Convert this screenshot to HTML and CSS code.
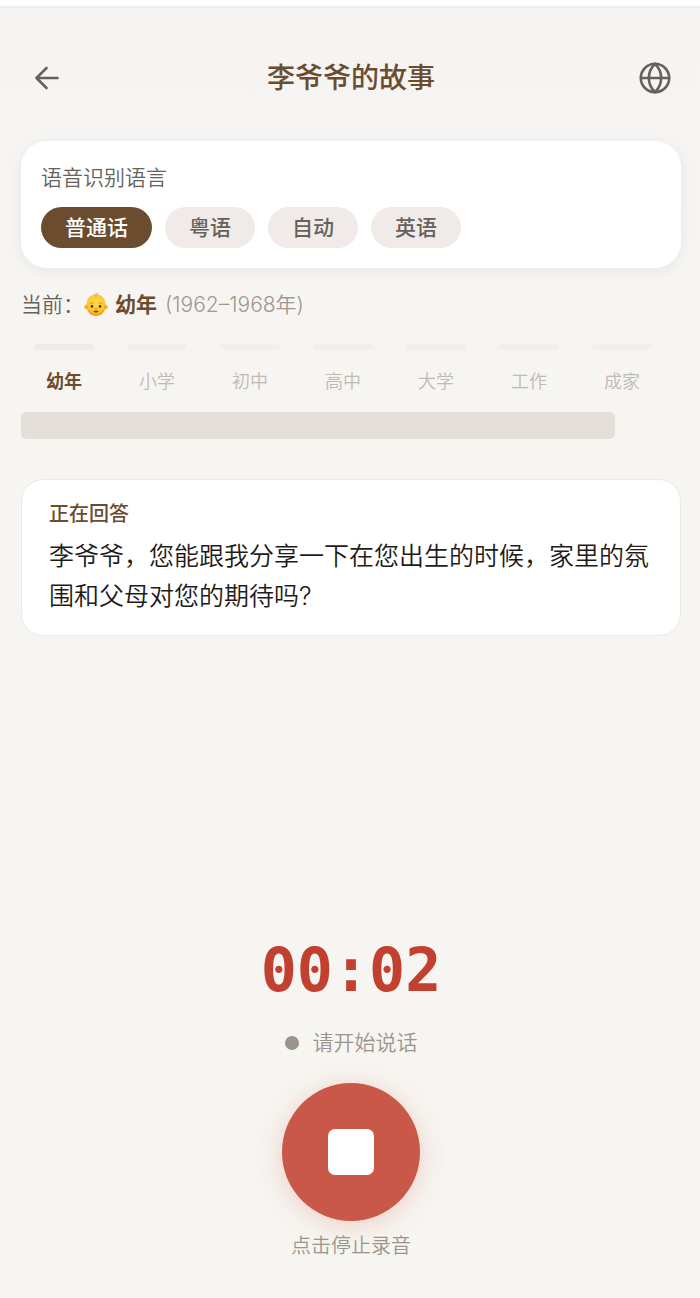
FILE: index.html
```html
<!DOCTYPE html>
<html lang="zh-CN">

<head>
    <meta charset="UTF-8" />
    <meta name="viewport" content="width=device-width, initial-scale=1">
    <title>李爷爷的故事</title>
    <link rel="stylesheet" href="styles.css">
</head>

<body>
    <div class="page">
        <header class="header">
            <button type="button" class="icon-btn" aria-label="返回">
                <svg width="32" height="32" viewBox="0 0 32 32" fill="none" stroke="currentColor" stroke-width="2.6" stroke-linecap="round" stroke-linejoin="round">
                    <path d="M26.500 16H5.500M15.500 6L5.500 16l10 10" />
                </svg>
            </button>
            <h1 class="title">李爷爷的故事</h1>
            <button type="button" class="icon-btn" aria-label="语言">
                <svg width="32" height="32" viewBox="0 0 32 32" fill="none" stroke="currentColor" stroke-width="2.6" stroke-linecap="round">
                    <circle cx="16" cy="16" r="14.2" />
                    <path d="M2 16h28M16 2C7.800 9.500 7.800 22.500 16 30M16 2c8.200 7.500 8.200 20.500 0 28" />
                </svg>
            </button>
        </header>

        <main class="main">
            <section class="lang-card">
                <h2 class="lang-label">语音识别语言</h2>
                <div class="chips">
                    <button type="button" class="chip active">普通话</button>
                    <button type="button" class="chip">粤语</button>
                    <button type="button" class="chip">自动</button>
                    <button type="button" class="chip">英语</button>
                </div>
            </section>

            <p class="current">
                <span>当前：</span>
                <svg class="baby" width="24" height="24" viewBox="0 0 24 24" role="img" aria-label="婴儿">
                    <defs>
                        <radialGradient id="skin" cx=".5" cy=".38" r=".62">
                            <stop offset="0" stop-color="#ffdc45" />
                            <stop offset=".7" stop-color="#fdc52d" />
                            <stop offset="1" stop-color="#ec9c16" />
                        </radialGradient>
                    </defs>
                    <circle cx="2.600" cy="14" r="2.300" fill="#f5b021" />
                    <circle cx="21.400" cy="14" r="2.300" fill="#f5b021" />
                    <path d="M12 1.500C6 1.500 2.500 6 2.500 12.500 2.500 19 7 23 12 23s9.500-4 9.500-10.500C21.500 6 18 1.500 12 1.500z" fill="url(#skin)" />
                    <path d="M14 .8c-1.500-.5-3.400.2-3.300 1.500.1 1.200 1.900 1.300 2.300.4" fill="none" stroke="#e0951b" stroke-width=".8" stroke-linecap="round" />
                    <path d="M6.500 10.300q1.200-1 2.500-.3M15 10q1.300-.7 2.500.3" fill="none" stroke="#c77d18" stroke-width=".8" stroke-linecap="round" />
                    <ellipse cx="8" cy="13.200" rx="1.200" ry="1.500" fill="#45301c" />
                    <ellipse cx="16" cy="13.200" rx="1.200" ry="1.500" fill="#45301c" />
                    <path d="M11 15.500q1 .7 2 0" fill="none" stroke="#d38b18" stroke-width=".8" stroke-linecap="round" />
                    <path d="M9.300 18q2.700-.8 5.400 0-2.700 3.400-5.400 0z" fill="#8d3b1b" />
                </svg>
                <strong>幼年</strong>
                <span class="years">(1962–1968年)</span>
            </p>

            <ol class="steps">
                <li class="step now">幼年</li>
                <li class="step">小学</li>
                <li class="step">初中</li>
                <li class="step">高中</li>
                <li class="step">大学</li>
                <li class="step">工作</li>
                <li class="step">成家</li>
            </ol>
            <div class="scroll-track">
                <div class="scroll-thumb"></div>
            </div>

            <section class="question">
                <h2 class="question-label">正在回答</h2>
                <p class="question-text">李爷爷，您能跟我分享一下在您出生的时候，家里的氛围和父母对您的期待吗?</p>
            </section>
        </main>

        <section class="recorder">
            <div class="timer" role="timer">00:02</div>
            <p class="status"><span class="dot"></span>请开始说话</p>
            <button type="button" class="record-btn" id="stop" aria-labelledby="stop-hint">
                <span class="stop-icon"></span>
            </button>
            <p class="hint" id="stop-hint">点击停止录音</p>
        </section>
    </div>
</body>

</html>
```
FILE: styles.css
```css
* {
    margin: 0;
    padding: 0;
    box-sizing: border-box;
}

body {
    background: #f6f5f2;
    font-family: Inter, "Noto Sans CJK SC", sans-serif;
    font-size: 21px;
    font-weight: 350;
    line-height: 30px;
    color: #66615d;
}

button {
    border: none;
    background: none;
    font: inherit;
    color: inherit;
    cursor: pointer;
}

.page {
    min-height: 100vh;
    display: flex;
    flex-direction: column;
    border-top: 6px solid #fefefe;
    background: linear-gradient(#f5f4f3, #f6f5f1 400px);
}

/* header */
.header {
    display: flex;
    align-items: center;
    justify-content: space-between;
    padding: 46px 19px 39px 21px;
    border-top: 2px solid #ececea;
}

.icon-btn {
    display: flex;
    align-items: center;
    justify-content: center;
    width: 52px;
    height: 48px;
    color: #66615d;
}

.title {
    font-size: 28px;
    line-height: 40px;
    font-weight: 500;
    color: #6b4c2f;
}

.main {
    padding: 0 19px 0 21px;
}

/* language */
.lang-card {
    padding: 22px 20px 20px;
    background: #fff;
    border-radius: 26px;
    box-shadow: 0 3px 14px rgba(0, 0, 0, 0.06);
}

.lang-label {
    font-size: 21px;
    font-weight: 350;
}

.chips {
    display: flex;
    flex-wrap: wrap;
    gap: 13px;
    margin-top: 14px;
}

.chip {
    height: 41px;
    padding: 0 24px;
    border-radius: 21px;
    background: #f0ebe8;
    font-weight: 500;
}

.chip.active {
    background: #6b4c2f;
    color: #fff;
}

/* current stage */
.current {
    display: flex;
    align-items: center;
    margin-top: 22px;
}

.baby {
    margin-right: 7px;
}

.current strong {
    margin-right: 8px;
    font-weight: 700;
    color: #6b4c2f;
}

.years {
    color: #a09892;
}

.steps {
    display: flex;
    gap: 7px;
    margin-top: 24px;
    overflow: hidden;
    list-style: none;
}

.step {
    flex: 0 0 86px;
    font-size: 18px;
    line-height: 28px;
    text-align: center;
    color: #bebab5;
}

.step::before {
    content: "";
    display: block;
    width: 60px;
    height: 6px;
    margin: 0 auto 18px;
    border-radius: 3px;
    background: #f1efec;
}

.step.now {
    font-weight: 700;
    color: #6b4c2f;
}

.step.now::before {
    background: #efebe7;
}

.scroll-track {
    margin-top: 16px;
}

.scroll-thumb {
    width: 90%;
    height: 27px;
    border-radius: 5px;
    background: #e4dfd9;
}

/* question */
.question {
    margin-top: 40px;
    padding: 20px 27px 19px;
    background: #fff;
    border: 1px solid #ebe8e5;
    border-radius: 22px;
}

.question-label {
    font-size: 20px;
    line-height: 28px;
    font-weight: 500;
    color: #6b4c2f;
}

.question-text {
    margin-top: 8px;
    font-size: 25px;
    line-height: 40px;
    color: #1e1b18;
}

/* recorder */
.recorder {
    flex: 1;
    display: flex;
    flex-direction: column;
    align-items: center;
    justify-content: flex-end;
    padding: 40px 19px 37px 21px;
}

.timer {
    font-family: "DejaVu Sans Mono", monospace;
    font-size: 60px;
    line-height: 70px;
    font-weight: 700;
    color: #c14030;
}

.status {
    display: flex;
    align-items: center;
    gap: 14px;
    margin-top: 23px;
    color: #9c948c;
}

.dot {
    width: 14px;
    height: 14px;
    border-radius: 50%;
    background: #9c948c;
}

.record-btn {
    display: flex;
    align-items: center;
    justify-content: center;
    width: 138px;
    height: 138px;
    margin-top: 25px;
    border-radius: 50%;
    background: #c95848;
    box-shadow: 0 4px 26px rgba(224, 90, 70, 0.25);
}

.stop-icon {
    width: 46px;
    height: 46px;
    border-radius: 7px;
    background: #fff;
}

.hint {
    margin-top: 10px;
    font-size: 20px;
    color: #9c948c;
}
```
